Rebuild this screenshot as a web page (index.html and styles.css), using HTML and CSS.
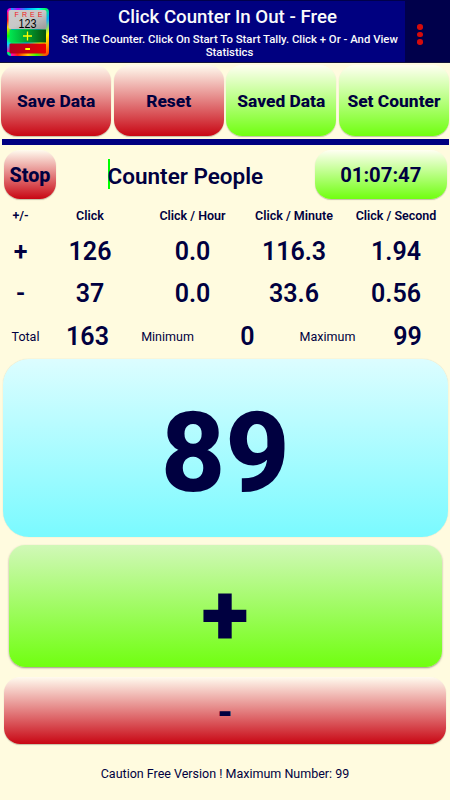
FILE: index.html
```html
<!DOCTYPE html>
<html lang="en">
<head>
<meta charset="utf-8">
<title>Click Counter In Out - Free</title>
<link rel="stylesheet" href="styles.css">
</head>
<body>
<header class="header">
  <div class="banner">
    <svg class="logo" viewBox="0 0 42 48" width="42" height="48">
      <defs>
        <linearGradient id="edge" x1="0" y1="0" x2="1" y2="1">
          <stop offset="0" stop-color="#f0c"/><stop offset=".16" stop-color="#c0f"/><stop offset=".3" stop-color="#09f"/><stop offset=".46" stop-color="#0f5"/><stop offset=".6" stop-color="#0af"/><stop offset=".76" stop-color="#ff0"/><stop offset="1" stop-color="#f20"/>
        </linearGradient>
        <linearGradient id="side" x1="0" y1="0" x2="0" y2="1">
          <stop offset="0" stop-color="#f08"/><stop offset=".2" stop-color="#f02"/><stop offset=".38" stop-color="#fc0"/><stop offset=".6" stop-color="#0f0"/><stop offset=".8" stop-color="#0df"/><stop offset="1" stop-color="#f0a"/>
        </linearGradient>
        <linearGradient id="top" x1="0" y1="0" x2="1" y2="0">
          <stop offset="0" stop-color="#0af"/><stop offset=".2" stop-color="#b0f"/><stop offset=".45" stop-color="#09f"/><stop offset=".8" stop-color="#0fe"/><stop offset="1" stop-color="#0f6"/>
        </linearGradient>
        <linearGradient id="bottom" x1="0" y1="0" x2="1" y2="0">
          <stop offset="0" stop-color="#f0c"/><stop offset=".2" stop-color="#f20"/><stop offset=".5" stop-color="#fc0"/><stop offset=".75" stop-color="#3f0"/><stop offset="1" stop-color="#f50"/>
        </linearGradient>
        <linearGradient id="gray" x1="0" y1="0" x2="1" y2="1"><stop offset="0" stop-color="#ccc"/><stop offset=".5" stop-color="#c8c8c8"/><stop offset="1" stop-color="#999"/></linearGradient>
        <linearGradient id="green" x1="0" y1="0" x2="1" y2="0"><stop offset="0" stop-color="#00e850"/><stop offset="1" stop-color="#06500d"/></linearGradient>
        <linearGradient id="red" x1="0" y1="0" x2="1" y2="0"><stop offset="0" stop-color="#b00020"/><stop offset="1" stop-color="#e80000"/></linearGradient>
      </defs>
      <rect width="42" height="48" rx="4" fill="url(#edge)"/>
      <rect y="4" width="4" height="40" fill="url(#side)"/>
      <rect x="4" width="34" height="3" fill="url(#top)"/>
      <rect x="4" y="45" width="34" height="3" fill="url(#bottom)"/>
      <rect x="1.5" y="2" width="38" height="19" rx="2" fill="url(#gray)"/>
      <rect x="2.5" y="21.500" width="36.500" height="13" fill="url(#green)"/>
      <rect x="2.500" y="35.500" width="36.500" height="10" rx="1" fill="url(#red)"/>
      <text class="logo-free" x="7.500" y="9" textLength="28">FREE</text>
      <text class="logo-num" x="20.500" y="20" text-anchor="middle" textLength="18" lengthAdjust="spacingAndGlyphs">123</text>
      <path d="M16 28h9M20.500 23.500v9" stroke="#ff0" stroke-width="1.300"/>
      <path d="M18.300 41h4.700" stroke="#ff0" stroke-width="2"/>
    </svg>
    <div class="headline">
      <h1 class="title">Click Counter In Out - Free</h1>
      <p class="subtitle">Set The Counter. Click On Start To Start Tally. Click + Or - And View Statistics</p>
    </div>
  </div>
  <div class="menu"><i></i><i></i><i></i></div>
</header>
<nav class="actions">
  <button class="btn red">Save Data</button>
  <button class="btn red">Reset</button>
  <button class="btn green">Saved Data</button>
  <button class="btn green">Set Counter</button>
</nav>
<div class="divider"></div>
<section class="session">
  <button class="btn red stop">Stop</button>
  <div class="name"><span class="caret"></span><span>Counter People</span></div>
  <div class="btn green timer">01:07:47</div>
</section>
<section class="stats labels"><span>+/-</span><span>Click</span><span>Click / Hour</span><span>Click / Minute</span><span>Click / Second</span></section>
<section class="stats values"><span>+</span><span>126</span><span>0.0</span><span>116.3</span><span>1.94</span></section>
<section class="stats values"><span>-</span><span>37</span><span>0.0</span><span>33.6</span><span>0.56</span></section>
<section class="totals"><span>Total</span><b>163</b><span>Minimum</span><b>0</b><span>Maximum</span><b>99</b></section>
<main class="pad">
  <div class="count">89</div>
  <button class="plus">+</button>
  <button class="btn red minus">-</button>
</main>
<footer class="caution">Caution Free Version ! Maximum Number: 99</footer>
</body>
</html>
```
FILE: styles.css
```css
* { box-sizing: border-box; }
body {
  margin: 0;
  width: 450px;
  height: 800px;
  overflow: hidden;
  background: #fffbdf;
  color: #000040;
  font-family: Roboto, "Liberation Sans", sans-serif;
}
button { border: 0; padding: 0; margin: 0; font-family: inherit; color: inherit; }
.header {
  display: flex;
  height: 63px;
  background: #00004b;
  border-bottom: 1px solid #15153a;
}
.banner {
  display: flex;
  width: 405px;
  height: 61px;
  margin-top: 1px;
  padding-left: 7px;
  background: #000080;
}
.logo { flex: none; margin-top: 7px; }
.logo-free { font: 7px "Liberation Sans", sans-serif; fill: #f01818; }
.logo-num { font: 12px "Liberation Sans", sans-serif; fill: #000; }
.headline { flex: 1; padding: 5px 0 0 1px; text-align: center; color: #fafafa; }
.title { margin: 0; font-size: 18.700px; font-weight: 500; line-height: 22px; white-space: nowrap; }
.subtitle { margin: 5px 0 0; padding-left: 4px; font-size: 11.350px; font-weight: 500; line-height: 13.3px; }
.menu {
  flex: 1;
  display: flex;
  flex-direction: column;
  align-items: center;
  padding: 24px 15px 0 0;
  gap: 2px;
}
.menu i { width: 5.600px; height: 5.600px; border-radius: 50%; background: #d40b0b; }
.btn {
  display: flex;
  align-items: center;
  justify-content: center;
  border-radius: 16px;
  box-shadow: 0 1px 1px rgba(60, 50, 40, .3);
  font-weight: 800;
}
.red { background: linear-gradient(#fffbef, #c80613); }
.green { background: linear-gradient(#fffff2, #70ff10); }
.actions {
  display: grid;
  grid-template-columns: repeat(4, 1fr);
  gap: 2.500px;
  padding: 2px 1px 0;
}
.actions .btn { height: 70.500px; padding-top: 1px; font-size: 17.400px; white-space: nowrap; }
.divider { height: 6.500px; margin: 3px 1.500px 0; background: #000080; }
.session { display: flex; height: 54px; padding: 4.500px 3.500px 0 4px; }
.session .btn { height: 49px; padding-top: 1px; }
.session .stop { width: 52px; padding-top: 2px; font-size: 19.700px; }
.name {
  flex: 1;
  display: flex;
  align-items: center;
  padding: 4px 0 0 52px;
  font-size: 22.500px;
  font-weight: 600;
  height: 49px;
  white-space: nowrap;
}
.caret { width: 2px; height: 30px; margin: -4px -2px 0 -.500px; background: #0f0; }
.session .timer { width: 131.500px; padding-top: 2px; font-size: 20.300px; font-weight: 700; }
.stats { display: grid; grid-template-columns: 41px 98px 107px 96px 108px; align-items: center; text-align: center; }
.labels { height: 33px; font-size: 12.500px; font-weight: 600; }
.values { height: 43px; font-size: 25px; font-weight: 600; }
.labels + .values { height: 38px; }
.values + .values { height: 47px; }
.totals {
  display: grid;
  grid-template-columns: 51px 73px 87px 73px 87px 73px;
  align-items: center;
  height: 40px;
  padding-bottom: 1px;
  text-align: center;
  font-size: 12.500px;
}
.totals span { padding-bottom: 1px; }
.totals b { font-size: 25px; font-weight: 600; }
.pad { display: flex; flex-direction: column; }
.count {
  display: flex;
  align-items: center;
  justify-content: center;
  height: 178px;
  margin: 1.500px 2.500px 0 3px;
  padding-top: 10px;
  border-radius: 26px;
  background: linear-gradient(#dcfdff, #7afaff);
  box-shadow: 0 0 1px rgba(0, 60, 60, .25);
  font-size: 112px;
  font-weight: 800;
}
.plus {
  display: flex;
  align-items: center;
  justify-content: center;
  height: 122px;
  margin: 8.500px 8.500px 0;
  padding-top: 17px;
  border-radius: 16px;
  background: linear-gradient(#d1f8b8, #70ff10);
  box-shadow: 0 1px 2px rgba(60, 50, 40, .5);
  font-size: 88px;
  font-weight: 900;
}
.minus { height: 67px; margin: 10px 4px 0; padding-top: 4px; font-size: 38px; }
.caution { margin-top: 22px; text-align: center; font-size: 12.500px; line-height: 16px; }
```
